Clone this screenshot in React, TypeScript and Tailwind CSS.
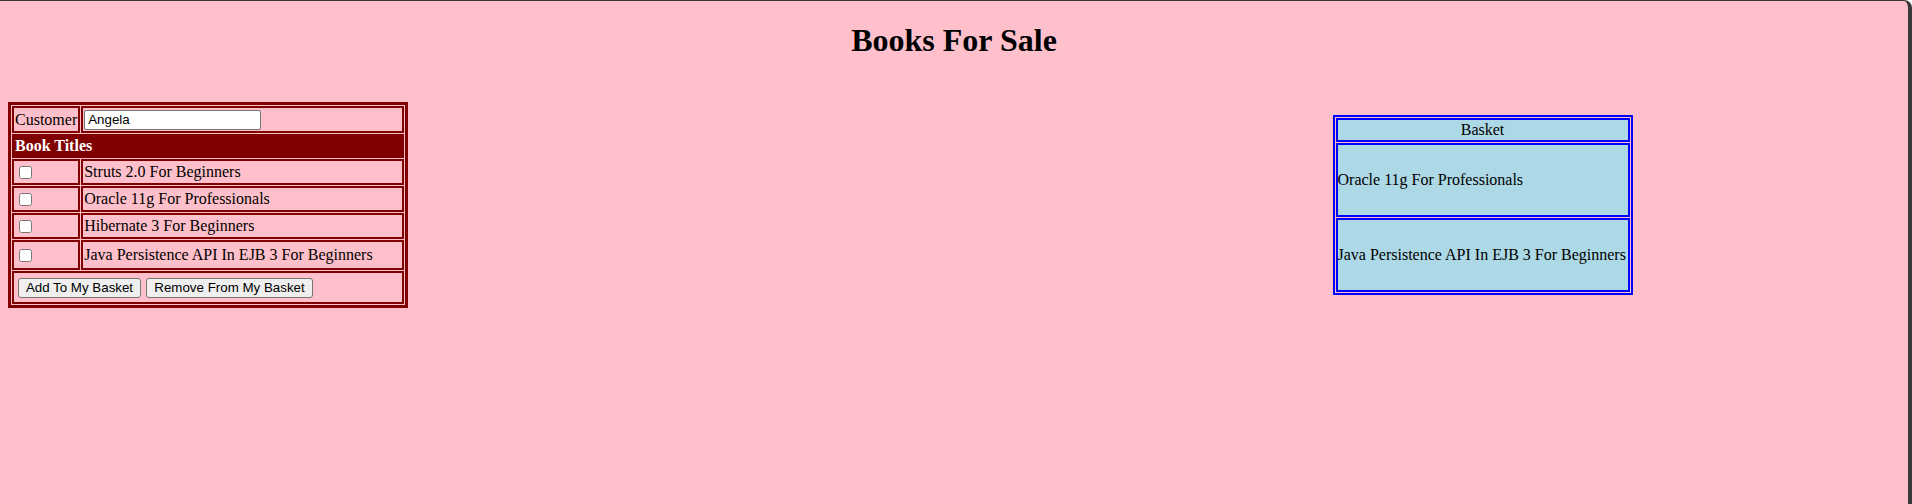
import React from 'react';

const books = [
  { title: 'Struts 2.0 For Beginners', h: 'h-[26px]' },
  { title: 'Oracle 11g For Professionals', h: 'h-[26px]' },
  { title: 'Hibernate 3 For Beginners', h: 'h-[26px]' },
  { title: 'Java Persistence API In EJB 3 For Beginners', h: 'h-[30px]' },
];

const basket = ['Oracle 11g For Professionals', 'Java Persistence API In EJB 3 For Beginners'];

const cell = 'border-2 border-[#800000] p-[1px] align-middle';
const btn =
  "h-[20px] bg-[#efefef] border border-[#767676] rounded-[3px] text-[13.33px] font-['Liberation_Sans',Arial,sans-serif] text-black leading-none";

export default function App() {
  return (
    <div className="min-h-[504px] bg-[#ffc0cb] border-t border-r-4 border-[#383838] rounded-tr-[8px] px-2 font-['Liberation_Serif','Times_New_Roman',serif] text-[16px] leading-[normal] text-black">
      <h1 className="mt-[21px] mb-[43px] h-[37px] text-center text-[32px] font-bold leading-[37px]">Books For Sale</h1>

      <div className="grid grid-cols-[1057px_1fr] items-center">
        {/* customer + book list */}
        <table className="w-[400px] border-[3px] border-[#800000] border-separate border-spacing-[1px]">
          <tbody>
            <tr className="h-[27px]">
              <td className={`${cell} w-[68px]`}>Customer</td>
              <td className={cell}>
                <input
                  type="text"
                  defaultValue="Angela"
                  className="block w-[177px] h-[20px] bg-white border border-[#767676] rounded-[2px] px-[3px] text-[13.33px] font-['Liberation_Sans',Arial,sans-serif] outline-none"
                />
              </td>
            </tr>
            <tr className="h-[24px]">
              <td colSpan={2} className="bg-[#800000] px-[3px] text-white font-bold">
                Book Titles
              </td>
            </tr>
            {books.map(b => (
              <tr key={b.title} className={b.h}>
                <td className={cell}>
                  <input type="checkbox" className="block w-[13px] h-[13px] ml-[4px]" />
                </td>
                <td className={cell}>{b.title}</td>
              </tr>
            ))}
            <tr className="h-[33px]">
              <td colSpan={2} className={`${cell} pl-[4px]`}>
                <div className="flex items-center gap-[5px]">
                  <button className={`${btn} w-[123px]`}>Add To My Basket</button>
                  <button className={`${btn} w-[167px]`}>Remove From My Basket</button>
                </div>
              </td>
            </tr>
          </tbody>
        </table>

        {/* basket */}
        <div className="flex justify-center">
          <table className="w-[300px] border-2 border-[#0000ff] border-separate border-spacing-[1px]">
            <tbody>
              <tr className="h-[24px]">
                <td className="bg-[#add8e6] border-2 border-[#0000ff] text-center">Basket</td>
              </tr>
              {basket.map(t => (
                <tr key={t} className="h-[74px]">
                  <td className="bg-[#add8e6] border-2 border-[#0000ff] px-0 align-middle">{t}</td>
                </tr>
              ))}
            </tbody>
          </table>
        </div>
      </div>
    </div>
  );
}
